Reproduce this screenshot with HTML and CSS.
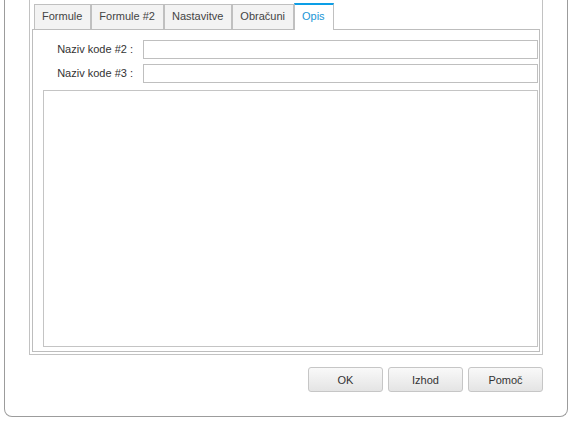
FILE: index.html
```html
<!DOCTYPE html>
<html lang="sl">
<head>
    <meta charset="UTF-8">
    <meta name="viewport" content="width=device-width, initial-scale=1.0">
    <title>Opis</title>
    <link rel="stylesheet" href="styles.css">
</head>
<body>
    <div class="window">
        <div class="frame">
            <div class="tabs">
                <div class="tab">Formule</div>
                <div class="tab">Formule #2</div>
                <div class="tab">Nastavitve</div>
                <div class="tab">Obračuni</div>
                <div class="tab active">Opis</div>
            </div>
            <div class="pane">
                <div class="fields">
                    <label for="koda2">Naziv kode #2 :</label>
                    <input type="text" id="koda2">
                    <label for="koda3">Naziv kode #3 :</label>
                    <input type="text" id="koda3">
                </div>
                <textarea class="note"></textarea>
            </div>
        </div>
        <div class="actions">
            <button>OK</button>
            <button>Izhod</button>
            <button>Pomoč</button>
        </div>
    </div>
</body>
</html>
```

FILE: styles.css
```css
/* dialog window, top part scrolled off */
* {
    box-sizing: border-box;
}

body {
    margin: 0;
    background: #fff;
    font-family: "Liberation Sans", Arial, sans-serif;
    font-size: 11px;
    color: #333;
}

.window {
    margin: 0 2px 0 4px;
    height: 417px;
    padding: 0 24px 24px;
    border: 1px solid #9c9c9c;
    border-top: none;
    border-radius: 0 0 8px 8px;
}

.frame {
    padding: 0 2px 2px;
    border: 1px solid #c2c2c2;
    border-top: none;
}

/* tab strip */
.tabs {
    display: flex;
    align-items: flex-end;
    height: 30px;
    padding-left: 2px;
    border-bottom: 1px solid #bdbdbd;
}

.tab {
    height: 25px;
    padding: 0 8px 0 7px;
    line-height: 23px;
    color: #444;
    background: #f3f3f3;
    border: 1px solid #c0c0c0;
    border-bottom: none;
}

.tab.active {
    height: 27px;
    margin-bottom: -1px;
    line-height: 23px;
    color: #1b96d6;
    background: #fff;
    border-top: 2px solid #0c9ee6;
}

.pane {
    padding: 10px 1px 4px 10px;
    border: 1px solid #bdbdbd;
    border-top: none;
}

.fields {
    display: grid;
    grid-template-columns: 90px 1fr;
    column-gap: 10px;
    row-gap: 5px;
}

.fields label {
    text-align: right;
    line-height: 19px;
}

.fields input {
    height: 19px;
    margin: 0;
    border: 1px solid #bfbfbf;
    font: inherit;
}

.note {
    display: block;
    width: 100%;
    height: 257px;
    margin: 7px 0 0;
    border: 1px solid #c4c4c4;
    resize: none;
    font: inherit;
}

/* bottom buttons */
.actions {
    display: flex;
    justify-content: flex-end;
    gap: 5px;
    margin-top: 12px;
}

.actions button {
    width: 75px;
    height: 25px;
    padding: 0;
    font: inherit;
    color: #333;
    background: linear-gradient(#f9f9f9, #e4e4e4);
    border: 1px solid #c6c6c6;
    border-radius: 3px;
}
```
